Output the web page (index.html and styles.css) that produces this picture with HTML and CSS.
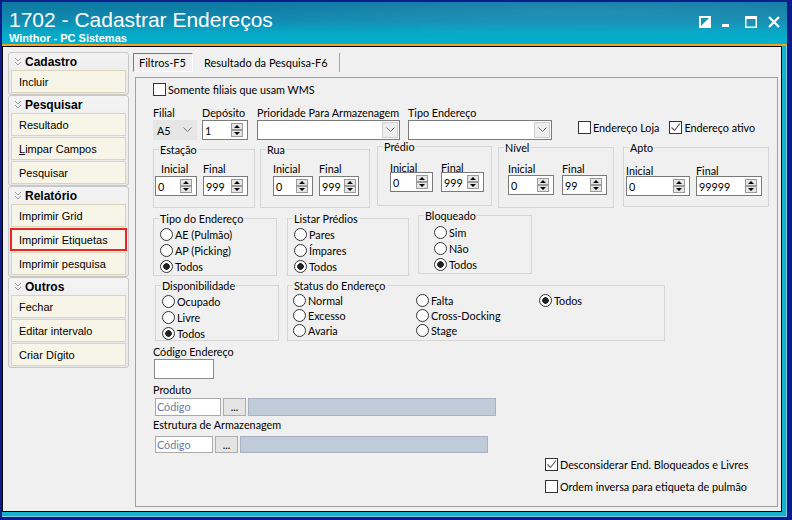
FILE: index.html
```html
<!DOCTYPE html>
<html lang="pt">
<head>
<meta charset="utf-8">
<title>1702 - Cadastrar Endereços</title>
<link rel="stylesheet" href="styles.css">
</head>
<body>
<div class="win">
  <div class="titlebar">
    <div class="titles">
      <div class="t1">1702 - Cadastrar Endereços</div>
      <div class="t2">Winthor - PC Sistemas</div>
    </div>
    <div class="wbtns">
      <svg class="wi-a" width="12" height="12" viewBox="0 0 12 12"><path d="M1 1h10v10H1z" fill="none" stroke="#fff" stroke-width="2"/><path d="M12 0V12H0z" fill="#fff"/></svg>
      <svg class="wi-min" width="7" height="12" viewBox="0 0 7 12"><rect x="0" y="8" width="7" height="3" fill="#fff"/></svg>
      <svg class="wi-max" width="12" height="12" viewBox="0 0 12 12"><path d="M0.75 1.5h10.5v9.75H0.75z" fill="none" stroke="#fff" stroke-width="1.5"/><rect x="0" y="0" width="12" height="3" fill="#fff"/></svg>
      <svg class="wi-x" width="12" height="12" viewBox="0 0 12 12"><path d="M1 1L11 11M11 1L1 11" stroke="#fff" stroke-width="2.2"/></svg>
    </div>
  </div>
  <div class="frame">
    <div class="band">
      <div class="client">
        <aside class="side">
          <div class="grp">
            <div class="grp-h"><svg width="8" height="9" viewBox="0 0 8 9"><path d="M1 1l3 3 3-3M1 5l3 3 3-3" fill="none" stroke="#a0a0a0" stroke-width="1"/></svg><span>Cadastro</span></div>
            <div class="sbtn">Incluir</div>
          </div>
          <div class="grp">
            <div class="grp-h"><svg width="8" height="9" viewBox="0 0 8 9"><path d="M1 1l3 3 3-3M1 5l3 3 3-3" fill="none" stroke="#a0a0a0" stroke-width="1"/></svg><span>Pesquisar</span></div>
            <div class="sbtn">Resultado</div>
            <div class="sbtn"><span><u>L</u>impar Campos</span></div>
            <div class="sbtn">Pesquisar</div>
          </div>
          <div class="grp">
            <div class="grp-h"><svg width="8" height="9" viewBox="0 0 8 9"><path d="M1 1l3 3 3-3M1 5l3 3 3-3" fill="none" stroke="#a0a0a0" stroke-width="1"/></svg><span>Relatório</span></div>
            <div class="sbtn">Imprimir Grid</div>
            <div class="sbtn hl">Imprimir Etiquetas</div>
            <div class="sbtn">Imprimir pesquisa</div>
          </div>
          <div class="grp">
            <div class="grp-h"><svg width="8" height="9" viewBox="0 0 8 9"><path d="M1 1l3 3 3-3M1 5l3 3 3-3" fill="none" stroke="#a0a0a0" stroke-width="1"/></svg><span>Outros</span></div>
            <div class="sbtn">Fechar</div>
            <div class="sbtn">Editar intervalo</div>
            <div class="sbtn">Criar Dígito</div>
          </div>
        </aside>

        <main class="main">
          <div class="tabs">
            <div class="tab on">Filtros-F5</div>
            <div class="tab off">Resultado da Pesquisa-F6</div>
          </div>
          <div class="panel">
            <div class="rowA">
              <label class="chk"><i class="cb"></i>Somente filiais que usam WMS</label>
            </div>

            <div class="rowB">
              <div class="fld f-filial">
                <div class="lb">Filial</div>
                <div class="combo dis"><span>A5</span><svg class="chev" width="9" height="6" viewBox="0 0 9 6"><path d="M0.5 0.5l4 4 4-4" fill="none" stroke="#777"/></svg></div>
              </div>
              <div class="fld f-dep">
                <div class="lb">Depósito</div>
                <div class="spin"><span>1</span><svg class="sb" width="12" height="14" viewBox="0 0 12 14"><rect x="0.5" y="0.5" width="11" height="6" fill="#e6e6e6" stroke="#9a9a9a"/><rect x="0.5" y="7.5" width="11" height="6" fill="#e6e6e6" stroke="#9a9a9a"/><path d="M3 5h6L6 2z M3 9h6L6 12z" fill="#000"/></svg></div>
              </div>
              <div class="fld f-prio">
                <div class="lb">Prioridade Para Armazenagem</div>
                <div class="combo"><span></span><i class="dd"><svg width="9" height="6" viewBox="0 0 9 6"><path d="M0.5 0.5l4 4 4-4" fill="none" stroke="#777"/></svg></i></div>
              </div>
              <div class="fld f-tipo">
                <div class="lb">Tipo Endereço</div>
                <div class="combo"><span></span><i class="dd"><svg width="9" height="6" viewBox="0 0 9 6"><path d="M0.5 0.5l4 4 4-4" fill="none" stroke="#777"/></svg></i></div>
              </div>
              <label class="chk c-loja"><i class="cb"></i>Endereço Loja</label>
              <label class="chk c-ativo"><i class="cb"><svg width="11" height="11" viewBox="0 0 11 11"><path d="M1.5 5.5l3 3 5.5-7" fill="none" stroke="#555" stroke-width="1.1"/></svg></i>Endereço ativo</label>
            </div>

            <div class="rowC">
              <fieldset class="gb g-est"><legend>Estação</legend>
                <div class="pair">
                  <div class="fld"><div class="lb ind">Inicial</div><div class="spin w42"><span>0</span><svg class="sb" width="12" height="14" viewBox="0 0 12 14"><rect x="0.5" y="0.5" width="11" height="6" fill="#e6e6e6" stroke="#9a9a9a"/><rect x="0.5" y="7.5" width="11" height="6" fill="#e6e6e6" stroke="#9a9a9a"/><path d="M3 5h6L6 2z M3 9h6L6 12z" fill="#000"/></svg></div></div>
                  <div class="fld"><div class="lb">Final</div><div class="spin w45"><span>999</span><svg class="sb" width="12" height="14" viewBox="0 0 12 14"><rect x="0.5" y="0.5" width="11" height="6" fill="#e6e6e6" stroke="#9a9a9a"/><rect x="0.5" y="7.5" width="11" height="6" fill="#e6e6e6" stroke="#9a9a9a"/><path d="M3 5h6L6 2z M3 9h6L6 12z" fill="#000"/></svg></div></div>
                </div>
              </fieldset>
              <fieldset class="gb g-rua"><legend>Rua</legend>
                <div class="pair">
                  <div class="fld"><div class="lb">Inicial</div><div class="spin w40"><span>0</span><svg class="sb" width="12" height="14" viewBox="0 0 12 14"><rect x="0.5" y="0.5" width="11" height="6" fill="#e6e6e6" stroke="#9a9a9a"/><rect x="0.5" y="7.5" width="11" height="6" fill="#e6e6e6" stroke="#9a9a9a"/><path d="M3 5h6L6 2z M3 9h6L6 12z" fill="#000"/></svg></div></div>
                  <div class="fld"><div class="lb">Final</div><div class="spin w40 tight"><span>999</span><svg class="sb" width="12" height="14" viewBox="0 0 12 14"><rect x="0.5" y="0.5" width="11" height="6" fill="#e6e6e6" stroke="#9a9a9a"/><rect x="0.5" y="7.5" width="11" height="6" fill="#e6e6e6" stroke="#9a9a9a"/><path d="M3 5h6L6 2z M3 9h6L6 12z" fill="#000"/></svg></div></div>
                </div>
              </fieldset>
              <fieldset class="gb g-pre"><legend>Prédio</legend>
                <div class="pair">
                  <div class="fld"><div class="lb">Inicial</div><div class="spin w43"><span>0</span><svg class="sb" width="12" height="14" viewBox="0 0 12 14"><rect x="0.5" y="0.5" width="11" height="6" fill="#e6e6e6" stroke="#9a9a9a"/><rect x="0.5" y="7.5" width="11" height="6" fill="#e6e6e6" stroke="#9a9a9a"/><path d="M3 5h6L6 2z M3 9h6L6 12z" fill="#000"/></svg></div></div>
                  <div class="fld"><div class="lb">Final</div><div class="spin w43"><span>999</span><svg class="sb" width="12" height="14" viewBox="0 0 12 14"><rect x="0.5" y="0.5" width="11" height="6" fill="#e6e6e6" stroke="#9a9a9a"/><rect x="0.5" y="7.5" width="11" height="6" fill="#e6e6e6" stroke="#9a9a9a"/><path d="M3 5h6L6 2z M3 9h6L6 12z" fill="#000"/></svg></div></div>
                </div>
              </fieldset>
              <fieldset class="gb g-niv"><legend>Nível</legend>
                <div class="pair">
                  <div class="fld"><div class="lb">Inicial</div><div class="spin w46"><span>0</span><svg class="sb" width="12" height="14" viewBox="0 0 12 14"><rect x="0.5" y="0.5" width="11" height="6" fill="#e6e6e6" stroke="#9a9a9a"/><rect x="0.5" y="7.5" width="11" height="6" fill="#e6e6e6" stroke="#9a9a9a"/><path d="M3 5h6L6 2z M3 9h6L6 12z" fill="#000"/></svg></div></div>
                  <div class="fld"><div class="lb">Final</div><div class="spin w45"><span>99</span><svg class="sb" width="12" height="14" viewBox="0 0 12 14"><rect x="0.5" y="0.5" width="11" height="6" fill="#e6e6e6" stroke="#9a9a9a"/><rect x="0.5" y="7.5" width="11" height="6" fill="#e6e6e6" stroke="#9a9a9a"/><path d="M3 5h6L6 2z M3 9h6L6 12z" fill="#000"/></svg></div></div>
                </div>
              </fieldset>
              <fieldset class="gb g-apt"><legend>Apto</legend>
                <div class="pair">
                  <div class="fld"><div class="lb">Inicial</div><div class="spin w64"><span>0</span><svg class="sb" width="12" height="14" viewBox="0 0 12 14"><rect x="0.5" y="0.5" width="11" height="6" fill="#e6e6e6" stroke="#9a9a9a"/><rect x="0.5" y="7.5" width="11" height="6" fill="#e6e6e6" stroke="#9a9a9a"/><path d="M3 5h6L6 2z M3 9h6L6 12z" fill="#000"/></svg></div></div>
                  <div class="fld"><div class="lb">Final</div><div class="spin w66"><span>99999</span><svg class="sb" width="12" height="14" viewBox="0 0 12 14"><rect x="0.5" y="0.5" width="11" height="6" fill="#e6e6e6" stroke="#9a9a9a"/><rect x="0.5" y="7.5" width="11" height="6" fill="#e6e6e6" stroke="#9a9a9a"/><path d="M3 5h6L6 2z M3 9h6L6 12z" fill="#000"/></svg></div></div>
                </div>
              </fieldset>
            </div>

            <div class="rowD">
              <fieldset class="gb g-tipo"><legend>Tipo do Endereço</legend>
                <div class="radios">
                  <div class="rad"><i class="rb"></i>AE (Pulmão)</div>
                  <div class="rad"><i class="rb"></i>AP (Picking)</div>
                  <div class="rad"><i class="rb on"></i>Todos</div>
                </div>
              </fieldset>
              <fieldset class="gb g-lis"><legend>Listar Prédios</legend>
                <div class="radios">
                  <div class="rad"><i class="rb"></i>Pares</div>
                  <div class="rad"><i class="rb"></i>Ímpares</div>
                  <div class="rad"><i class="rb on"></i>Todos</div>
                </div>
              </fieldset>
              <fieldset class="gb g-blo"><legend>Bloqueado</legend>
                <div class="radios">
                  <div class="rad"><i class="rb"></i>Sim</div>
                  <div class="rad"><i class="rb"></i>Não</div>
                  <div class="rad"><i class="rb on"></i>Todos</div>
                </div>
              </fieldset>
            </div>

            <div class="rowE">
              <fieldset class="gb g-dis"><legend>Disponibilidade</legend>
                <div class="radios">
                  <div class="rad"><i class="rb"></i>Ocupado</div>
                  <div class="rad"><i class="rb"></i>Livre</div>
                  <div class="rad"><i class="rb on"></i>Todos</div>
                </div>
              </fieldset>
              <fieldset class="gb g-sta"><legend>Status do Endereço</legend>
                <div class="radgrid">
                  <div class="rad"><i class="rb"></i>Normal</div>
                  <div class="rad"><i class="rb"></i>Excesso</div>
                  <div class="rad"><i class="rb"></i>Avaria</div>
                  <div class="rad"><i class="rb"></i>Falta</div>
                  <div class="rad"><i class="rb"></i>Cross-Docking</div>
                  <div class="rad"><i class="rb"></i>Stage</div>
                  <div class="rad"><i class="rb on"></i>Todos</div>
                </div>
              </fieldset>
            </div>

            <div class="lb l-cod">Código Endereço</div>
            <div class="inp i-cod"></div>
            <div class="lb l-prod">Produto</div>
            <div class="lkp k1"><div class="inp ph c1">Código</div><div class="dots">...</div><div class="desc"></div></div>
            <div class="lb l-estr">Estrutura de Armazenagem</div>
            <div class="lkp k2"><div class="inp ph c2">Código</div><div class="dots">...</div><div class="desc"></div></div>

            <div class="bchk">
              <label class="chk"><i class="cb"><svg width="11" height="11" viewBox="0 0 11 11"><path d="M1.5 5.5l3 3 5.5-7" fill="none" stroke="#555" stroke-width="1.1"/></svg></i>Desconsiderar End. Bloqueados e Livres</label>
              <label class="chk ch2"><i class="cb"></i>Ordem inversa para etiqueta de pulmão</label>
            </div>
          </div>
        </main>
      </div>
    </div>
  </div>
</div>
</body>
</html>
```
FILE: styles.css
```css
* { box-sizing: border-box; }
html, body { margin: 0; padding: 0; }
body {
  width: 792px; height: 520px; overflow: hidden;
  background: #0b1c8c;
  font-family: "Lato", "Liberation Sans", sans-serif;
  font-size: 10.8px; color: #000;
}
.win { width: 792px; height: 520px; padding-top: 2px; }

/* title bar */
.titlebar {
  margin-left: 2px; width: 785px; height: 44px;
  border-bottom: 2px solid #f2a31c;
  display: flex; justify-content: space-between;
  padding: 6px 7px 0 7px;
  background:
    radial-gradient(ellipse 520px 40px at 75% 8px, rgba(120,200,225,0.18), rgba(0,0,0,0) 70%),
    linear-gradient(180deg, #0d78a0 0%, #128bb1 45%, #07a6c5 70%, #02b3cf 100%);
  color: #fff;
}
.t1 { font-family: "Liberation Sans", sans-serif; font-size: 21px; line-height: 24px; }
.t2 { font-family: "Liberation Sans", sans-serif; font-weight: bold; font-size: 11px; line-height: 13px; }
.wbtns { display: flex; align-items: flex-start; padding-top: 8px; }
.wi-min { margin-left: 11px; }
.wi-max { margin-left: 16px; }
.wi-x { margin-left: 11px; }

/* frame */
.frame { margin-left: 2px; width: 785px; height: 471px; border-right: 1px solid #7fc8e0; border-bottom: 1px solid #7fc8e0; }
.band { height: 100%; border-right: 4px solid #14b3cd; border-bottom: 4px solid #14b3cd; }
.client {
  height: 100%; border: 1px solid #000; background: #f0f0f0;
  display: flex; align-items: flex-start;
  padding: 5px 0 0 5px;
}

/* sidebar */
.side { width: 121px; display: flex; flex-direction: column; }
.grp {
  border: 1px solid #c8c8c8; border-radius: 3px;
  background: linear-gradient(180deg, #f3f3f3, #e8e8e8);
  padding: 0 2px 1px 2px;
}
.grp-h {
  height: 17px; display: flex; align-items: center; gap: 3px;
  padding-left: 3px;
  font-family: "Liberation Sans", sans-serif; font-weight: bold; font-size: 12px;
}
.sbtn {
  height: 23px; margin-bottom: 1px;
  border: 1px solid #d9d5bb; background: #f7f5e7;
  display: flex; align-items: center; padding-left: 7px;
  font-family: "Liberation Sans", sans-serif; font-size: 11px;
}
.sbtn:last-child { margin-bottom: 0; }
.sbtn.hl { margin-left: -1px; margin-right: -1px; border: 2px solid #e4262b; }

/* main */
.main { margin-left: 4px; width: 645px; padding-top: 1px; }
.tabs { display: flex; height: 19px; font-size: 11px; }
.tab { display: flex; align-items: center; height: 19px; white-space: nowrap; }
.tab.on { width: 60px; padding-left: 5px; border: 1px solid; border-color: #7a7a7a #ffffff #ffffff #7a7a7a; }
.tab.off { width: 147px; padding-left: 11px; border-right: 1px solid #a8a8a8; }
.panel {
  margin: 5px 0 0 2px; width: 643px; height: 430px;
  border: 1px solid #a0a0a0;
}

.lb { line-height: 15px; height: 15px; white-space: nowrap; }
.chk { display: flex; align-items: center; gap: 2px; height: 13px; white-space: nowrap; }
.cb { width: 13px; height: 13px; border: 1px solid #333; background: #fff; display: flex; align-items: center; justify-content: center; flex: none; }

.rowA { margin: 5px 0 0 17px; height: 13px; }

.rowB { display: flex; align-items: flex-start; margin-top: 9px; height: 35px; }
.fld { display: flex; flex-direction: column; }
.f-filial { margin-left: 17px; width: 44px; }
.f-dep { margin-left: 5px; width: 46px; }
.f-prio { margin-left: 9px; width: 143px; }
.f-tipo { margin-left: 8px; width: 144px; }
.c-loja { margin: 16px 0 0 26px; }
.c-ativo { margin: 16px 0 0 10px; }

.combo {
  height: 20px; border: 1px solid #7a7a7a; background: #fff;
  display: flex; align-items: center; justify-content: space-between;
  padding: 0 1px 0 3px;
}
.combo.dis { background: #e6e6e6; border-color: #e6e6e6; padding: 0 4px 0 3px; }
.dd { width: 16px; height: 16px; border: 1px solid #cfcfcf; background: #ededed; display: flex; align-items: center; justify-content: center; }
.w40 { width: 40px; } .w42 { width: 42px; } .w43 { width: 43px; }
.w45 { width: 45px; } .w46 { width: 46px; } .w64 { width: 64px; } .w66 { width: 66px; }

.spin {
  height: 20px; border: 1px solid #7a7a7a; background: #fff;
  display: flex; align-items: center; justify-content: space-between;
  padding: 0 4px 0 2px;
}
.spin.tight { padding-right: 2px; }
.sb { flex: none; }

/* group boxes */
.gb { margin: 0; padding: 0; border: 1px solid #d6d6d6; min-width: 0; }
.gb legend { padding: 0 1px; margin-left: 5px; line-height: 15px; height: 15px; }
.pair { display: flex; }

.rowC { display: flex; align-items: flex-start; margin-top: -1px; height: 69px; }
.g-est { margin: 3px 0 0 17px; width: 102px; height: 66px; }
.g-est .pair { padding: 4px 0 0 1px; gap: 6px; }
.g-est .ind { padding-left: 6px; }
.g-rua { margin: 3px 0 0 5px; width: 110px; height: 66px; }
.g-rua .pair { padding: 4px 0 0 12px; gap: 6px; }
.g-pre { margin: 0 0 0 7px; width: 115px; height: 67px; }
.g-pre .pair { padding: 6px 0 0 12px; gap: 8px; }
.g-pre .lb { margin-bottom: -3px; }
.g-niv { margin: 1px 0 0 6px; width: 116px; height: 68px; }
.g-niv .pair { padding: 6px 0 0 9px; gap: 8px; }
.g-niv .lb { margin-bottom: -1px; }
.g-apt { margin: 1px 0 0 9px; width: 146px; height: 67px; }
.g-apt .pair { padding: 8px 0 0 2px; gap: 6px; }
.g-apt .lb { margin-bottom: -2px; }

.rad { display: flex; align-items: center; gap: 2px; height: 16px; white-space: nowrap; }
.rb { width: 13px; height: 13px; border: 1px solid #333; border-radius: 50%; background: #fff; flex: none; }
.rb.on { background: radial-gradient(circle at 50% 50%, #222 0 3px, #fff 3.6px); }

.rowD { display: flex; align-items: flex-start; margin-top: 0px; height: 70px; }
.g-tipo { margin: 3px 0 0 17px; width: 124px; height: 65px; }
.g-tipo .radios { padding-left: 6px; }
.g-lis { margin: 3px 0 0 10px; width: 122px; height: 65px; }
.g-lis .radios { padding-left: 6px; }
.g-blo { margin: 0 0 0 9px; width: 114px; height: 66px; }
.g-blo .radios { padding: 1px 0 0 15px; }

.rowE { display: flex; align-items: flex-start; margin-top: -1px; height: 64px; }
.g-dis { margin: 1px 0 0 19px; width: 124px; height: 63px; }
.g-dis .radios { padding-left: 6px; }
.g-sta { margin: 1px 0 0 8px; width: 378px; height: 63px; }
.radgrid {
  display: grid; grid-template-columns: 123px 123px 100px;
  grid-template-rows: repeat(3, 15px); grid-auto-flow: column;
  padding-left: 5px;
}
.radgrid .rad { height: 15px; }

.l-cod { margin: 3px 0 0 17px; }
.inp { border: 1px solid #8a8a8a; background: #fff; }
.i-cod { margin-left: 18px; width: 60px; height: 20px; }
.l-prod { margin: 3px 0 0 17px; }
.lkp { display: flex; margin-left: 19px; }
.k1 { margin-top: 1px; height: 18px; }
.k2 { margin-top: 4px; height: 17px; }
.ph { color: #6a7aa2; padding-left: 1px; line-height: 16px; border-color: #a9a9a9; }
.c1 { width: 66px; }
.c2 { width: 58px; }
.dots { width: 23px; margin-left: 2px; border: 1px solid #adadad; background: #e4e4e4; text-align: center; line-height: 16px; }
.desc { width: 248px; margin-left: 2px; border: 1px solid #a9b3bf; background: #bfcbd8; }
.l-estr { margin: 1px 0 0 17px; }
.bchk { margin: 5px 0 0 409px; display: flex; flex-direction: column; }
.ch2 { margin-top: 9px; }
```
